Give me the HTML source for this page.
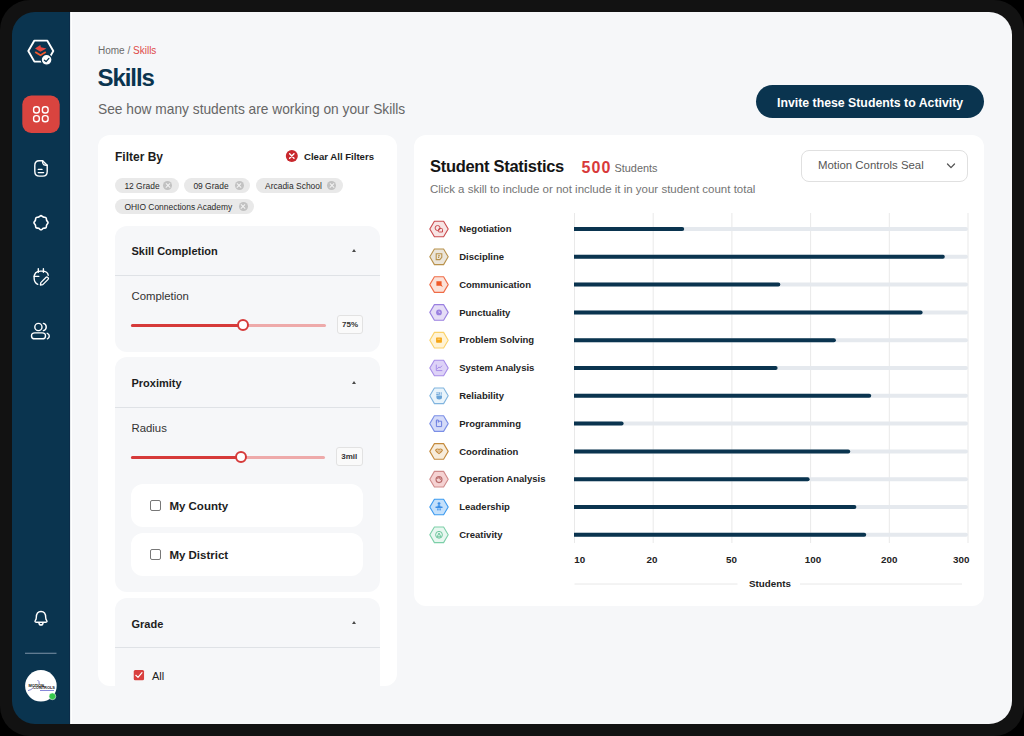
<!DOCTYPE html>
<html><head><meta charset="utf-8">
<style>
*{margin:0;padding:0;box-sizing:border-box;}
html,body{width:1024px;height:736px;overflow:hidden;background:#000;font-family:"Liberation Sans",sans-serif;position:relative;}
#frame{position:absolute;left:0;top:0;width:1024px;height:736px;background:#121212;border-radius:30px;}
#screen{position:absolute;left:12px;top:12px;width:1000px;height:712px;background:linear-gradient(to right,#0a344f 57px,#0b2d4a 57px,#0b2d4a 58px,#e6e9ec 58px,#e6e9ec 58.6px,#ffffff 58.6px,#ffffff 60px,#f6f7f9 60px);border-radius:23px;}

.t{position:absolute;white-space:nowrap;line-height:1;}
.b{font-weight:bold;}
svg{position:absolute;overflow:visible;}
.chip{position:absolute;height:15.25px;border-radius:8px;background:#e9e9e9;}
.chip span{position:absolute;left:9.4px;top:3.6px;font-size:8.45px;line-height:1;color:#2a2a2a;white-space:nowrap;}
.chip::after{content:"";position:absolute;right:6.5px;top:3.1px;width:9px;height:9px;border-radius:50%;background:#c2c2c2;}
.chip i{position:absolute;right:10.5px;top:7.1px;width:1px;height:1px;}
.chip i::before,.chip i::after{content:"";position:absolute;left:-2.5px;top:-0.5px;width:6px;height:1.2px;background:#f2f2f2;transform:rotate(45deg);z-index:2;}
.chip i::after{transform:rotate(-45deg);}
.sec{position:absolute;left:114.5px;width:265.5px;background:#f6f7f9;border-radius:12px;}
.div{position:absolute;left:114.5px;width:265.5px;height:1px;background:#dfe2e6;}
.sh{font-size:11px;color:#1d1d1d;}
.lab{font-size:11.35px;color:#333;}
.chev{position:absolute;width:0;height:0;border-left:2.9px solid transparent;border-right:2.9px solid transparent;border-bottom:3.2px solid #4a4a4a;margin-left:-0.4px;}
.trk{position:absolute;height:3px;border-radius:2px;background:#eeaaaa;}
.fill{position:absolute;height:3px;border-radius:2px;background:#d63a3a;}
.knob{position:absolute;width:12px;height:12px;border-radius:50%;background:#fff;border:2.6px solid #d63a3a;}
.vbox{position:absolute;height:19.4px;border:1px solid #e2e2e2;border-radius:3px;background:#fafafa;font-size:8px;font-weight:bold;color:#333;text-align:center;line-height:17.4px;}
.card{position:absolute;left:131px;width:232px;height:43px;background:#fff;border-radius:12px;}
.cb{position:absolute;width:10.6px;height:10.6px;border:1.3px solid #777;border-radius:2px;background:#fff;}
.cl{font-size:11.5px;color:#1d1d1d;}
.rl{font-size:9.5px;color:#252525;}
.ax{font-size:9.8px;color:#222;}

</style></head>
<body>
<div id="frame"></div>
<div id="screen"></div>


<!-- SIDEBAR ICONS -->
<svg style="left:0;top:0" width="1024" height="736">
  <!-- logo hexagon -->
  <path d="M28.3 51 L34.4 40.6 L47.2 40.6 L53.3 51 L47.2 61.6 L34.4 61.6 Z" fill="none" stroke="#fff" stroke-width="1.9" stroke-linejoin="round"/>
  <path d="M35 48.6 L40.3 44.9 L40.9 47.3 L46.4 48.6 L40.5 51.8 Z" fill="#e8473f"/>
  <path d="M35.2 52 L40.5 55.2 L45.8 52" fill="none" stroke="#f25a2e" stroke-width="1.9" stroke-linejoin="round"/>
  <circle cx="46.6" cy="59.8" r="5.4" fill="#fff" stroke="#0a344f" stroke-width="1.2"/>
  <path d="M44.4 60.2 L46.1 61.6 L48.9 58.4" fill="none" stroke="#0a344f" stroke-width="1.3" stroke-linecap="round" stroke-linejoin="round"/>
  <!-- active tile -->
  <rect x="22.3" y="95.5" width="37.4" height="37.4" rx="9" fill="#d9443f"/>
  <g fill="none" stroke="#fff" stroke-width="1.4">
    <rect x="33.6" y="106.8" width="5.7" height="6.2" rx="2.5"/>
    <rect x="42.4" y="106.8" width="5.7" height="6.2" rx="2.5"/>
    <rect x="33.6" y="115.6" width="5.7" height="6.2" rx="2.5"/>
    <rect x="42.4" y="115.6" width="5.7" height="6.2" rx="2.5"/>
  </g>
  <!-- doc icon -->
  <g fill="none" stroke="#fff" stroke-width="1.4" stroke-linecap="round" stroke-linejoin="round">
    <path d="M42.6 160.7 H39.2 Q34.8 160.7 34.8 165.5 V171.5 Q34.8 176.1 39.5 176.1 H42.8 Q47.2 176.1 47.2 171.5 V165.2 Z"/>
    <path d="M42.6 160.7 Q42.2 163.8 43.6 164.6 Q45 165.4 47.2 165.2"/>
    <path d="M38.3 169.4 H42 M38.3 172.6 H43.6"/>
  </g>
  <!-- badge icon -->
  <path d="M41.00 215.65 C41.78 215.65 42.50 216.72 43.33 217.06 C44.17 217.41 45.43 217.16 45.99 217.71 C46.54 218.27 46.29 219.53 46.64 220.37 C46.98 221.20 48.05 221.92 48.05 222.70 C48.05 223.48 46.98 224.20 46.64 225.03 C46.29 225.87 46.54 227.13 45.99 227.69 C45.43 228.24 44.17 227.99 43.33 228.34 C42.50 228.68 41.78 229.75 41.00 229.75 C40.22 229.75 39.50 228.68 38.67 228.34 C37.83 227.99 36.57 228.24 36.01 227.69 C35.46 227.13 35.71 225.87 35.36 225.03 C35.02 224.20 33.95 223.48 33.95 222.70 C33.95 221.92 35.02 221.20 35.36 220.37 C35.71 219.53 35.46 218.27 36.01 217.71 C36.57 217.16 37.83 217.41 38.67 217.06 C39.50 216.72 40.22 215.65 41.00 215.65 Z" fill="none" stroke="#fff" stroke-width="1.6" stroke-linejoin="round"/>
  <!-- calendar edit -->
  <g fill="none" stroke="#fff" stroke-width="1.4" stroke-linecap="round" stroke-linejoin="round">
    <path d="M37.8 284.3 Q34.1 283 34.1 277.8 Q34.1 271.1 40.5 271.1 H41.8 Q47.9 271.1 48.2 275.2"/>
    <path d="M38.3 268.7 V272.3 M43.4 268.7 V272.3 M34.2 276.4 H38.8"/>
    <path d="M40.4 285 L40.8 282.6 L46.1 277.3 Q46.9 276.6 47.7 277.4 L48.1 277.8 Q48.9 278.6 48.1 279.4 L42.8 284.6 Z" stroke-width="1.3"/>
  </g>
  <!-- users -->
  <g fill="none" stroke="#fff" stroke-width="1.4" stroke-linecap="round">
    <circle cx="38.4" cy="327" r="3.6"/>
    <path d="M34.8 332.9 H42.2 Q45.5 332.9 45.5 335.9 Q45.5 338.8 42.2 338.8 H34.8 Q31.5 338.8 31.5 335.9 Q31.5 332.9 34.8 332.9 Z"/>
    <path d="M43.4 323.4 A3.7 3.7 0 0 1 43.4 330.6"/>
    <path d="M47.2 333.3 A2.9 2.9 0 0 1 47.4 338.8"/>
  </g>
  <!-- bell -->
  <g fill="none" stroke="#fff" stroke-width="1.4" stroke-linecap="round" stroke-linejoin="round">
    <path d="M36.3 617.6 Q36.3 611.5 41 611.5 Q45.7 611.5 45.7 617.6 Q45.7 619.4 46.7 620.5 Q47.6 622.2 45.9 622.2 H36.1 Q34.4 622.2 35.3 620.5 Q36.3 619.4 36.3 617.6 Z"/>
    <path d="M38.9 622.6 Q39 625 41 625 Q43 625 43.1 622.6"/>
  </g>
  <line x1="25" y1="653.3" x2="56.5" y2="653.3" stroke="#6a8499" stroke-width="1.2"/>
  <circle cx="40.9" cy="685.8" r="15.8" fill="#fff"/>
  <g fill="#151515" font-family="Liberation Sans" font-weight="bold" font-size="2.9">
    <text x="28.6" y="686.7" textLength="15.5" lengthAdjust="spacingAndGlyphs">MOTION</text>
    <text x="33" y="689.1" textLength="22" lengthAdjust="spacingAndGlyphs">CONTROLS</text>
  </g>
  <rect x="40" y="690.2" width="14" height="0.8" fill="#6a6ad0"/>
  <path d="M28 690.6 Q31 690 33 688 M37.5 680 Q39.5 681 39.2 684" stroke="#4a4ab8" stroke-width="0.7" fill="none"/>
  <circle cx="52.4" cy="696.3" r="3.4" fill="#34c84a" stroke="#e8f5ea" stroke-width="0.6"/>
</svg>

<!-- HEADER -->
<div class="t" style="left:98px;top:46px;font-size:10px;color:#6b6b6b;">Home / <span style="color:#e04a48">Skills</span><i></i></div>
<div class="t b" style="left:97.6px;top:65.9px;font-size:24px;color:#0a344f;letter-spacing:-1.1px;">Skills</div>
<div class="t" style="left:98px;top:103px;font-size:13.75px;color:#666;">See how many students are working on your Skills</div>
<div style="position:absolute;left:756px;top:85px;width:228px;height:33px;border-radius:17px;background:#0a344f;"></div>
<div class="t b" style="left:777px;top:96.6px;font-size:12.3px;color:#fff;">Invite these Students to Activity</div>

<!-- FILTER PANEL -->
<div id="filter" style="position:absolute;left:98px;top:135px;width:299px;height:551px;background:#fff;border-radius:12px;overflow:hidden;">
<div style="position:absolute;left:-98px;top:-135px;width:1024px;height:736px;">
  <div class="t b" style="left:115px;top:151.1px;font-size:12px;color:#1d1d1d;">Filter By</div>
  <svg style="left:0;top:0" width="1" height="1">
    <circle cx="291.8" cy="156" r="6" fill="#c8282d"/>
    <path d="M289.6 153.8 L294 158.2 M294 153.8 L289.6 158.2" stroke="#fff" stroke-width="1.4" stroke-linecap="round"/>
  </svg>
  <div class="t b" style="left:304px;top:151.6px;font-size:9.6px;color:#1d1d1d;">Clear All Filters</div>

  <div class="chip" style="left:115px;top:178px;width:63.5px;"><span>12 Grade</span><i></i></div>
  <div class="chip" style="left:184px;top:178px;width:66px;"><span>09 Grade</span><i></i></div>
  <div class="chip" style="left:255.7px;top:178px;width:87px;"><span>Arcadia School</span><i></i></div>
  <div class="chip" style="left:115px;top:199px;width:139px;"><span>OHIO Connections Academy</span><i></i></div>

  <!-- Section 1 -->
  <div class="sec" style="top:225.5px;height:126px;"></div>
  <div class="div" style="top:275px;"></div>
  <div class="t b sh" style="left:131.5px;top:246px;">Skill Completion</div>
  <div class="chev" style="left:352.5px;top:248.8px;"></div>
  <div class="t lab" style="left:131.5px;top:290.6px;">Completion</div>
  <div class="trk" style="left:130.6px;top:323.5px;width:195px;"></div>
  <div class="fill" style="left:130.6px;top:323.5px;width:112px;"></div>
  <div class="knob" style="left:236.7px;top:319px;"></div>
  <div class="vbox" style="left:337px;top:315px;width:26px;">75%</div>

  <!-- Section 2 -->
  <div class="sec" style="top:357.3px;height:234.5px;"></div>
  <div class="div" style="top:407px;"></div>
  <div class="t b sh" style="left:131.5px;top:378px;">Proximity</div>
  <div class="chev" style="left:352.5px;top:380.6px;"></div>
  <div class="t lab" style="left:131.5px;top:422.6px;">Radius</div>
  <div class="trk" style="left:130.6px;top:455.5px;width:194px;"></div>
  <div class="fill" style="left:130.6px;top:455.5px;width:110px;"></div>
  <div class="knob" style="left:235px;top:451px;"></div>
  <div class="vbox" style="left:335.5px;top:447px;width:27.5px;">3mil</div>
  <div class="card" style="top:484px;"></div>
  <div class="cb" style="left:150.4px;top:500.4px;"></div>
  <div class="t b cl" style="left:169.4px;top:501px;">My County</div>
  <div class="card" style="top:532.7px;"></div>
  <div class="cb" style="left:150.4px;top:549px;"></div>
  <div class="t b cl" style="left:169.4px;top:549.6px;">My District</div>

  <!-- Section 3 -->
  <div class="sec" style="top:598px;height:200px;"></div>
  <div class="div" style="top:647px;"></div>
  <div class="t b sh" style="left:131.5px;top:618.5px;">Grade</div>
  <div class="chev" style="left:352.5px;top:621px;"></div>
  <svg style="left:0;top:0" width="1" height="1">
    <rect x="133.75" y="670" width="10.3" height="10.3" rx="1.5" fill="#d9403f"/>
    <path d="M135.8 675.3 L138 677.4 L142 672.6" fill="none" stroke="#fff" stroke-width="1.2" stroke-linecap="round" stroke-linejoin="round"/>
  </svg>
  <div class="t" style="left:152px;top:670.5px;font-size:11px;color:#222;">All</div>
</div>
</div>

<!-- CHART PANEL -->
<div id="chart" style="position:absolute;left:414px;top:135px;width:570px;height:471px;background:#fff;border-radius:12px;"></div>
<div class="t b" style="left:430px;top:157.9px;font-size:16.5px;color:#151515;letter-spacing:-0.3px;">Student Statistics</div>
<div class="t b" style="left:581.6px;top:159.6px;font-size:16px;color:#d8393a;letter-spacing:1px;">500</div>
<div class="t" style="left:614.5px;top:163.2px;font-size:10.9px;color:#6a6a6a;">Students</div>
<div class="t" style="left:430px;top:184.1px;font-size:11.5px;color:#747474;">Click a skill to include or not include it in your student count total</div>
<div style="position:absolute;left:801px;top:149.6px;width:166.5px;height:32.2px;border:1px solid #e0e0e0;border-radius:8px;background:#fff;"></div>
<div class="t" style="left:818px;top:160.3px;font-size:11.4px;color:#555;">Motion Controls Seal</div>
<svg style="left:0;top:0" width="1" height="1">
<line x1="574.5" y1="213" x2="574.5" y2="543" stroke="#e9e9e9" stroke-width="1"/>
<line x1="653.2" y1="213" x2="653.2" y2="543" stroke="#e9e9e9" stroke-width="1"/>
<line x1="731.9" y1="213" x2="731.9" y2="543" stroke="#e9e9e9" stroke-width="1"/>
<line x1="810.6" y1="213" x2="810.6" y2="543" stroke="#e9e9e9" stroke-width="1"/>
<line x1="889.3" y1="213" x2="889.3" y2="543" stroke="#e9e9e9" stroke-width="1"/>
<line x1="968.0" y1="213" x2="968.0" y2="543" stroke="#e9e9e9" stroke-width="1"/>
<path d="M429.8 229.0 L434.4 221.20 L443.6 221.20 L448.2 229.0 L443.6 236.80 L434.4 236.80 Z" fill="#f7e4e4" stroke="#c94a4e" stroke-width="1.1" stroke-linejoin="round"/>
<g fill="none" stroke="#c94a4e" stroke-width="1"><circle cx="437.6" cy="228.0" r="2.5"/><path d="M439 228.5 h2.6 q0.9 0 0.9 0.9 v2.6 h-3.2 q-1.2 0-1.2-1.2 z"/></g>
<rect x="574" y="227.0" width="394" height="4" rx="2" fill="#e5e9ee"/>
<path d="M574 227.0 H682.2 A2 2 0 0 1 682.2 231.0 H574 Z" fill="#0a344f"/>
<path d="M429.8 256.8 L434.4 249.00 L443.6 249.00 L448.2 256.8 L443.6 264.60 L434.4 264.60 Z" fill="#ebe5da" stroke="#b8914a" stroke-width="1.1" stroke-linejoin="round"/>
<g fill="none" stroke="#b8914a" stroke-width="1.1"><path d="M436.2 253.8 h5.6 v3.6 l-2 2.2 h-3.6 z"/><path d="M438 255.8 h2 M438 257.40000000000003 h1.2"/></g>
<rect x="574" y="254.8" width="394" height="4" rx="2" fill="#e5e9ee"/>
<path d="M574 254.8 H942.8 A2 2 0 0 1 942.8 258.8 H574 Z" fill="#0a344f"/>
<path d="M429.8 284.6 L434.4 276.80 L443.6 276.80 L448.2 284.6 L443.6 292.40 L434.4 292.40 Z" fill="#fbe2d9" stroke="#ef6c47" stroke-width="1.1" stroke-linejoin="round"/>
<g fill="#f05a28"><path d="M436.4 281.3 h5.2 v3.4 l1.3 2.3 l-2.4 -1.3 h-4.1 z"/></g>
<rect x="574" y="282.6" width="394" height="4" rx="2" fill="#e5e9ee"/>
<path d="M574 282.6 H778.3 A2 2 0 0 1 778.3 286.6 H574 Z" fill="#0a344f"/>
<path d="M429.8 312.4 L434.4 304.60 L443.6 304.60 L448.2 312.4 L443.6 320.20 L434.4 320.20 Z" fill="#e5ddf6" stroke="#9a80e0" stroke-width="1.1" stroke-linejoin="round"/>
<circle cx="439" cy="312.4" r="2.9" fill="#9a80e0"/><path d="M439 310.79999999999995 v1.7 h1.3" stroke="#e5ddf6" stroke-width="0.7" fill="none"/>
<rect x="574" y="310.4" width="394" height="4" rx="2" fill="#e5e9ee"/>
<path d="M574 310.4 H920.6 A2 2 0 0 1 920.6 314.4 H574 Z" fill="#0a344f"/>
<path d="M429.8 340.2 L434.4 332.40 L443.6 332.40 L448.2 340.2 L443.6 348.00 L434.4 348.00 Z" fill="#fff3d5" stroke="#fbd26a" stroke-width="1.1" stroke-linejoin="round"/>
<rect x="436.1" y="337.5" width="5.8" height="5.2" rx="0.6" fill="#f5a516"/><path d="M437.4 339.2 h3" stroke="#fff3d5" stroke-width="0.6"/>
<rect x="574" y="338.2" width="394" height="4" rx="2" fill="#e5e9ee"/>
<path d="M574 338.2 H833.9 A2 2 0 0 1 833.9 342.2 H574 Z" fill="#0a344f"/>
<path d="M429.8 368.0 L434.4 360.20 L443.6 360.20 L448.2 368.0 L443.6 375.80 L434.4 375.80 Z" fill="#ddd2f7" stroke="#a78ce8" stroke-width="1.1" stroke-linejoin="round"/>
<g fill="none" stroke="#a78ce8" stroke-width="1" stroke-linecap="round" stroke-linejoin="round"><path d="M436.3 365.0 v5.6 h5.6"/><path d="M437.5 368.6 l1.4-1.6 l1.2 0.8 l1.6-1.8"/></g>
<rect x="574" y="366.0" width="394" height="4" rx="2" fill="#e5e9ee"/>
<path d="M574 366.0 H775.6 A2 2 0 0 1 775.6 370.0 H574 Z" fill="#0a344f"/>
<path d="M429.8 395.8 L434.4 388.00 L443.6 388.00 L448.2 395.8 L443.6 403.60 L434.4 403.60 Z" fill="#e9f4fb" stroke="#80b4de" stroke-width="1.1" stroke-linejoin="round"/>
<g stroke="#6aa3d6" stroke-width="0.9" fill="none" stroke-linecap="round"><path d="M436.6 392.9 h1.8 M436.6 394.5 h1.8"/><path d="M439.4 392.6 v1.8 M441.2 392.6 v1.8"/></g><path d="M436.4 395.6 h5.6 v1.6 q0 2.2-2.8 2.2 q-2.8 0-2.8-2.2 z" fill="#6aa3d6"/>
<rect x="574" y="393.8" width="394" height="4" rx="2" fill="#e5e9ee"/>
<path d="M574 393.8 H869.2 A2 2 0 0 1 869.2 397.8 H574 Z" fill="#0a344f"/>
<path d="M429.8 423.6 L434.4 415.80 L443.6 415.80 L448.2 423.6 L443.6 431.40 L434.4 431.40 Z" fill="#d5dbf8" stroke="#7b8fe6" stroke-width="1.1" stroke-linejoin="round"/>
<g fill="none" stroke="#6d7fe0" stroke-width="1" stroke-linejoin="round"><path d="M438.3 421.2 H441.6 V426.6 H436.4 V421.2"/><path d="M436.4 422.6 V420 H438.3 V422.6"/></g>
<rect x="574" y="421.6" width="394" height="4" rx="2" fill="#e5e9ee"/>
<path d="M574 421.6 H621.6 A2 2 0 0 1 621.6 425.6 H574 Z" fill="#0a344f"/>
<path d="M429.8 451.4 L434.4 443.60 L443.6 443.60 L448.2 451.4 L443.6 459.20 L434.4 459.20 Z" fill="#f7ecdb" stroke="#c48a3c" stroke-width="1.1" stroke-linejoin="round"/>
<path d="M435.6 450.2 q1.6-1.8 3.4-0.8 q1.8-1 3.4 0.8 l-1.2 1.6 l-2.2 1.8 l-2.2-1.8 z" fill="none" stroke="#c48a3c" stroke-width="1.1" stroke-linejoin="round"/><path d="M437.2 451 h3.6" stroke="#c48a3c" stroke-width="0.9"/>
<rect x="574" y="449.4" width="394" height="4" rx="2" fill="#e5e9ee"/>
<path d="M574 449.4 H848.2 A2 2 0 0 1 848.2 453.4 H574 Z" fill="#0a344f"/>
<path d="M429.8 479.2 L434.4 471.40 L443.6 471.40 L448.2 479.2 L443.6 487.00 L434.4 487.00 Z" fill="#f5d2d2" stroke="#cf8a8a" stroke-width="1.1" stroke-linejoin="round"/>
<g fill="none" stroke="#b86c6c" stroke-width="1.1"><circle cx="439" cy="479.6" r="3"/><path d="M436.6 478.6 L439.4 477.6 L440.8 479.8"/></g>
<rect x="574" y="477.2" width="394" height="4" rx="2" fill="#e5e9ee"/>
<path d="M574 477.2 H807.6 A2 2 0 0 1 807.6 481.2 H574 Z" fill="#0a344f"/>
<path d="M429.8 507.0 L434.4 499.20 L443.6 499.20 L448.2 507.0 L443.6 514.80 L434.4 514.80 Z" fill="#c4e0fb" stroke="#3b9af0" stroke-width="1.1" stroke-linejoin="round"/>
<g fill="#3b8ee6"><circle cx="439" cy="503.6" r="1.4"/><rect x="437.6" y="505.3" width="2.8" height="2.2" rx="0.4"/><rect x="435.4" y="506.6" width="7.2" height="1.4" rx="0.4"/><rect x="437.3" y="508.4" width="1.2" height="2"/><rect x="439.5" y="508.4" width="1.2" height="2"/></g>
<rect x="574" y="505.0" width="394" height="4" rx="2" fill="#e5e9ee"/>
<path d="M574 505.0 H854.4 A2 2 0 0 1 854.4 509.0 H574 Z" fill="#0a344f"/>
<path d="M429.8 534.8 L434.4 527.00 L443.6 527.00 L448.2 534.8 L443.6 542.60 L434.4 542.60 Z" fill="#e8f7f0" stroke="#7ccfa8" stroke-width="1.1" stroke-linejoin="round"/>
<g fill="none" stroke="#5fbf92" stroke-width="0.9"><circle cx="439" cy="534.8" r="3.4"/><path d="M437.2 536.8 l1.8-3.8 l1.8 3.8 z"/></g>
<rect x="574" y="532.8" width="394" height="4" rx="2" fill="#e5e9ee"/>
<path d="M574 532.8 H864.2 A2 2 0 0 1 864.2 536.8 H574 Z" fill="#0a344f"/>
<line x1="574.5" y1="584" x2="737.5" y2="584" stroke="#e8e8e8" stroke-width="1"/>
<line x1="800" y1="584" x2="962" y2="584" stroke="#e8e8e8" stroke-width="1"/>
<path d="M947.5 164 L951 167.6 L954.5 164" fill="none" stroke="#555" stroke-width="1.3" stroke-linecap="round" stroke-linejoin="round"/>
</svg>
<div class="t b rl" style="left:459.2px;top:224.20px;">Negotiation</div>
<div class="t b rl" style="left:459.2px;top:252.00px;">Discipline</div>
<div class="t b rl" style="left:459.2px;top:279.80px;">Communication</div>
<div class="t b rl" style="left:459.2px;top:307.60px;">Punctuality</div>
<div class="t b rl" style="left:459.2px;top:335.40px;">Problem Solving</div>
<div class="t b rl" style="left:459.2px;top:363.20px;">System Analysis</div>
<div class="t b rl" style="left:459.2px;top:391.00px;">Reliability</div>
<div class="t b rl" style="left:459.2px;top:418.80px;">Programming</div>
<div class="t b rl" style="left:459.2px;top:446.60px;">Coordination</div>
<div class="t b rl" style="left:459.2px;top:474.40px;">Operation Analysis</div>
<div class="t b rl" style="left:459.2px;top:502.20px;">Leadership</div>
<div class="t b rl" style="left:459.2px;top:530.00px;">Creativity</div>
<div class="t b ax" style="left:574.2px;top:555px;">10</div>
<div class="t b ax" style="left:646.5px;top:555px;">20</div>
<div class="t b ax" style="left:726px;top:555px;">50</div>
<div class="t b ax" style="left:804.8px;top:555px;">100</div>
<div class="t b ax" style="left:881px;top:555px;">200</div>
<div class="t b ax" style="left:953px;top:555px;">300</div>
<div class="t b ax" style="left:749px;top:579px;">Students</div>

</body></html>
